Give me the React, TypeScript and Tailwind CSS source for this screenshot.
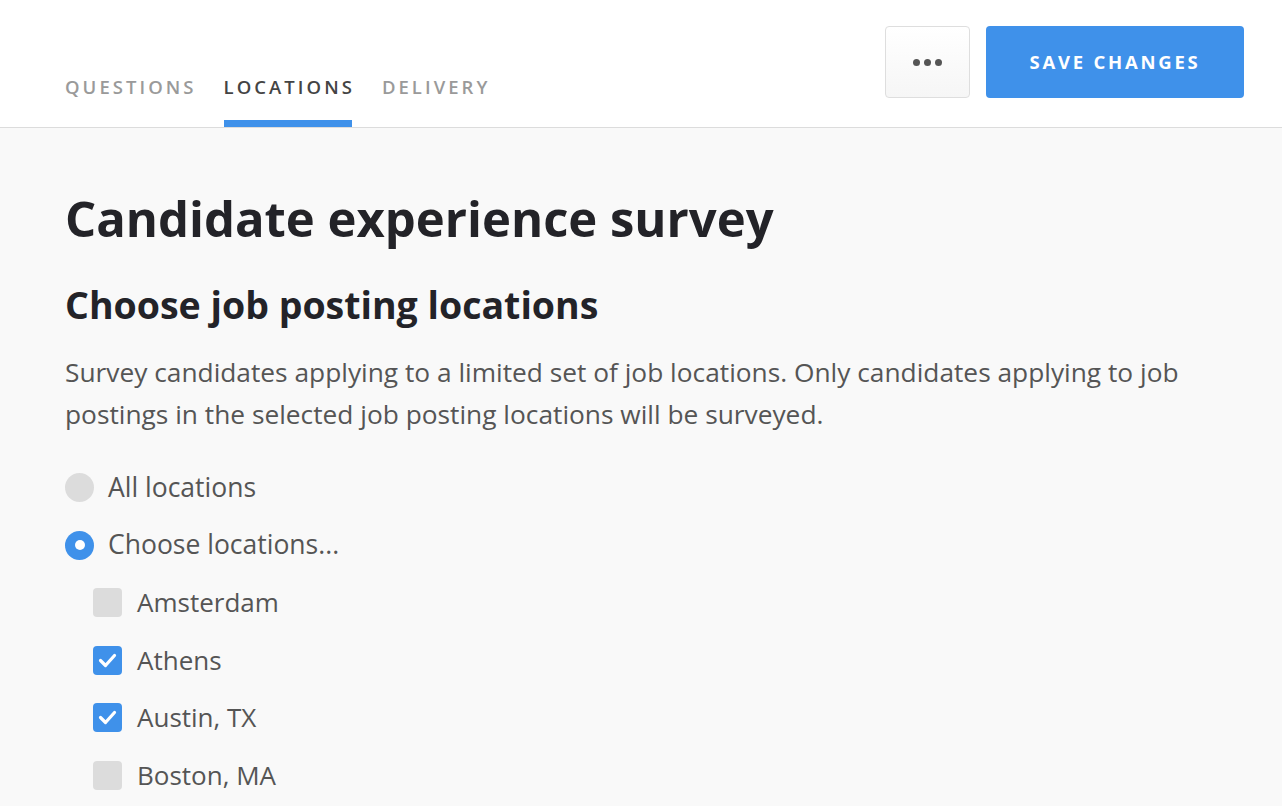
import { useState } from "react";

const tabs = ["Questions", "Locations", "Delivery"];

const cities = [
  { name: "Amsterdam", checked: false },
  { name: "Athens", checked: true },
  { name: "Austin, TX", checked: true },
  { name: "Boston, MA", checked: false },
];

export default function App() {
  const [active, setActive] = useState("Locations");
  const [mode, setMode] = useState<"all" | "choose">("choose");
  const [checked, setChecked] = useState<Record<string, boolean>>(
    Object.fromEntries(cities.map((c) => [c.name, c.checked]))
  );

  return (
    <div
      className="min-h-screen bg-[#f9f9f9] text-[#555]"
      style={{ fontFamily: '"Open Sans", "Noto Sans", sans-serif' }}
    >
      <header className="h-[128px] bg-white border-b border-[#dcdcdc] flex justify-between pl-[65px] pr-[38px]">
        <nav className="flex items-end gap-[30px]">
          {tabs.map((t) => (
            <button
              key={t}
              onClick={() => setActive(t)}
              className={`flex flex-col items-center uppercase text-[18.5px] tracking-[0.165em] font-semibold ${
                active === t ? "text-[#444]" : "text-[#9a9a9a]"
              }`}
            >
              <span className="leading-none pb-[24px] -mr-[0.165em]">{t}</span>
              <span className={`h-[7px] w-full ${active === t ? "bg-[#3f91ea]" : "bg-transparent"}`} />
            </button>
          ))}
        </nav>
        <div className="flex items-start gap-4 pt-[26px]">
          <button className="w-[85px] h-[72px] rounded-[4px] border border-[#dedede] bg-gradient-to-b from-white to-[#f6f6f6] flex items-center justify-center gap-[4px]">
            <span className="w-[7px] h-[7px] rounded-full bg-[#555]" />
            <span className="w-[7px] h-[7px] rounded-full bg-[#555]" />
            <span className="w-[7px] h-[7px] rounded-full bg-[#555]" />
          </button>
          <button className="w-[258px] h-[72px] rounded-[4px] bg-[#3f91ea] text-white uppercase text-[18.5px] font-bold tracking-[0.15em]">
            Save changes
          </button>
        </div>
      </header>

      <main className="pl-[65px] pr-[40px] pt-[58px]">
        <h1 className="text-[49px] leading-[64px] font-bold text-[#232328]">Candidate experience survey</h1>
        <h2 className="mt-[30px] text-[37.5px] leading-[50px] font-bold text-[#232328]">Choose job posting locations</h2>
        <p className="mt-[21px] text-[26.3px] leading-[42px] text-[#555] max-w-[1160px]">
          Survey candidates applying to a limited set of job locations. Only candidates applying to job postings in the
          selected job posting locations will be surveyed.
        </p>

        <div className="mt-[24px] flex flex-col">
          <label className="h-[57.5px] flex items-center gap-[14px] cursor-pointer" onClick={() => setMode("all")}>
            <span
              className={`w-[29px] h-[29px] rounded-full flex items-center justify-center ${
                mode === "all" ? "bg-[#3f91ea]" : "bg-[#dcdcdc]"
              }`}
            >
              {mode === "all" && <span className="w-[10px] h-[10px] rounded-full bg-white" />}
            </span>
            <span className="text-[26.5px]">All locations</span>
          </label>
          <label className="h-[57.5px] flex items-center gap-[14px] cursor-pointer" onClick={() => setMode("choose")}>
            <span
              className={`w-[29px] h-[29px] rounded-full flex items-center justify-center ${
                mode === "choose" ? "bg-[#3f91ea]" : "bg-[#dcdcdc]"
              }`}
            >
              {mode === "choose" && <span className="w-[10px] h-[10px] rounded-full bg-white" />}
            </span>
            <span className="text-[26.5px]">Choose locations...</span>
          </label>
          {cities.map((c) => (
            <label
              key={c.name}
              className="h-[57.5px] flex items-center gap-[15px] pl-[28px] cursor-pointer"
              onClick={() => setChecked((s) => ({ ...s, [c.name]: !s[c.name] }))}
            >
              <span
                className={`w-[29px] h-[29px] rounded-[4px] flex items-center justify-center ${
                  checked[c.name] ? "bg-[#3f91ea]" : "bg-[#dcdcdc]"
                }`}
              >
                {checked[c.name] && (
                  <svg width="19" height="15" viewBox="0 0 19 15" fill="none">
                    <path d="M2.5 7.5l5 5 9-10" stroke="white" strokeWidth="3.2" strokeLinecap="round" strokeLinejoin="round" />
                  </svg>
                )}
              </span>
              <span className="text-[26px]">{c.name}</span>
            </label>
          ))}
        </div>
      </main>
    </div>
  );
}
